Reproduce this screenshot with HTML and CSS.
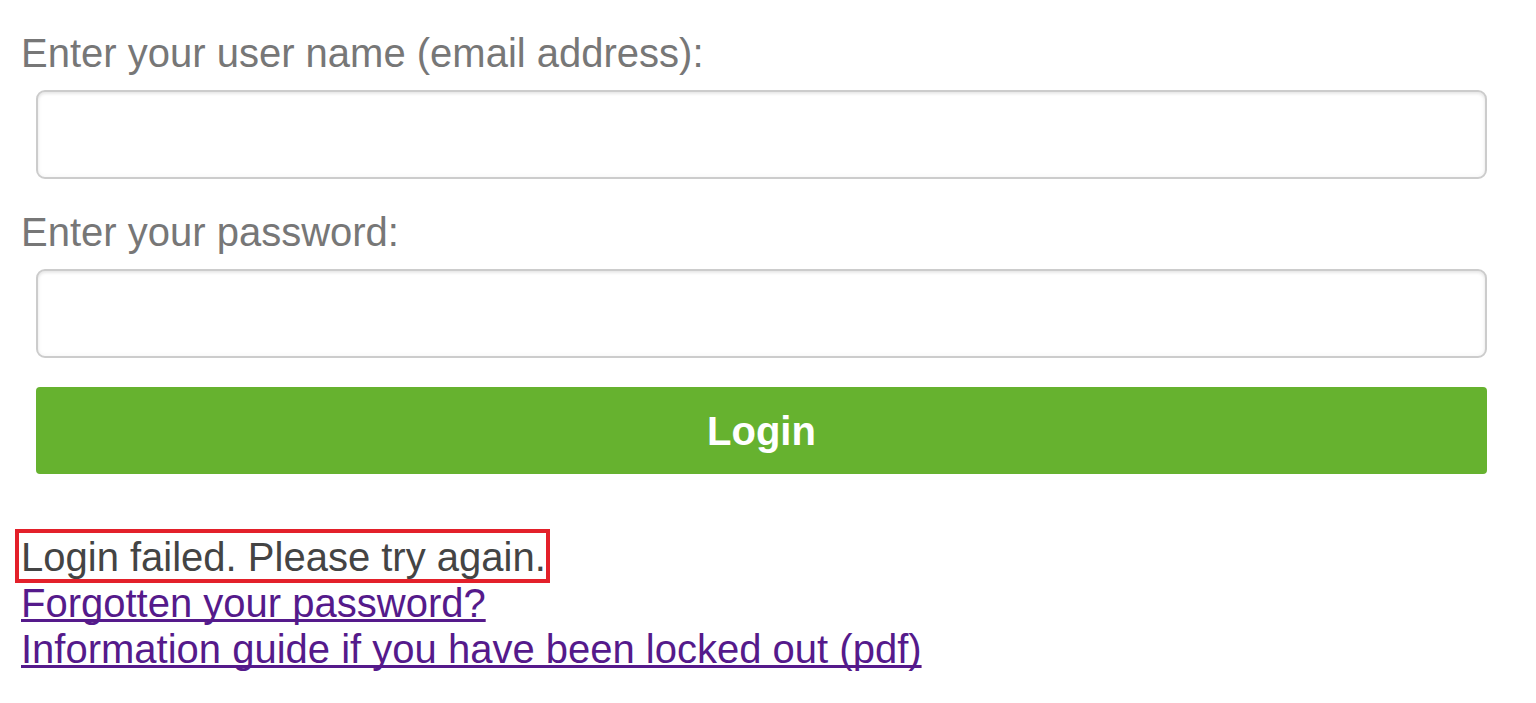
FILE: index.html
```html
<!DOCTYPE html>
<html lang="en">
<head>
<meta charset="utf-8">
<title>Login</title>
<link rel="stylesheet" href="styles.css">
</head>
<body>
<form class="login-form">
  <label class="field-label" for="user">Enter your user name (email address):</label>
  <input class="field-input" id="user" type="text">
  <label class="field-label field-label-second" for="pass">Enter your password:</label>
  <input class="field-input" id="pass" type="password">
  <button class="login-btn" type="button">Login</button>
  <div class="messages">
    <div class="msg-line"><span class="error-box">Login failed. Please try again.</span></div>
    <div class="msg-line"><a class="link" href="#">Forgotten your password?</a></div>
    <div class="msg-line"><a class="link" href="#">Information guide if you have been locked out (pdf)</a></div>
  </div>
</form>
</body>
</html>
```

FILE: styles.css
```css
html, body {
  margin: 0;
  padding: 0;
  background: #ffffff;
}

body {
  font-family: "Liberation Sans", Arial, sans-serif;
  font-size: 40px;
  line-height: 46px;
}

.login-form {
  display: flex;
  flex-direction: column;
  align-items: stretch;
  padding: 30px 49px 0 21px;
  margin: 0;
}

.field-label {
  display: block;
  color: #777777;
  font-size: 40px;
  line-height: 46px;
}

.field-label-second {
  margin-top: 30px;
}

.field-input {
  display: block;
  box-sizing: border-box;
  margin: 14px 0 0 15px;
  height: 89px;
  border: 2px solid #cccccc;
  border-radius: 9px;
  background: #ffffff;
  box-shadow: inset 0 2px 3px rgba(0, 0, 0, 0.075), inset 0 0 5px rgba(0, 0, 0, 0.05);
  font-family: inherit;
  font-size: 36px;
  padding: 0 20px;
  outline: none;
}

.login-btn {
  display: flex;
  align-items: center;
  justify-content: center;
  box-sizing: border-box;
  margin: 29px 0 0 15px;
  height: 87px;
  border: none;
  border-radius: 4px;
  background: #66b22f;
  color: #ffffff;
  font-family: "Liberation Sans", Arial, sans-serif;
  font-weight: bold;
  font-size: 40px;
  line-height: 46px;
  padding: 0;
  cursor: pointer;
}

.messages {
  margin-top: 60px;
}

.msg-line {
  line-height: 46px;
}

.error-box {
  color: #444444;
  border: 4px solid #e3202a;
  padding: 2px 0 0 2px;
  margin-left: -6px;
}

.link {
  color: #551a8b;
  text-decoration: underline;
  text-decoration-thickness: 3px;
  text-decoration-skip-ink: none;
}
```
